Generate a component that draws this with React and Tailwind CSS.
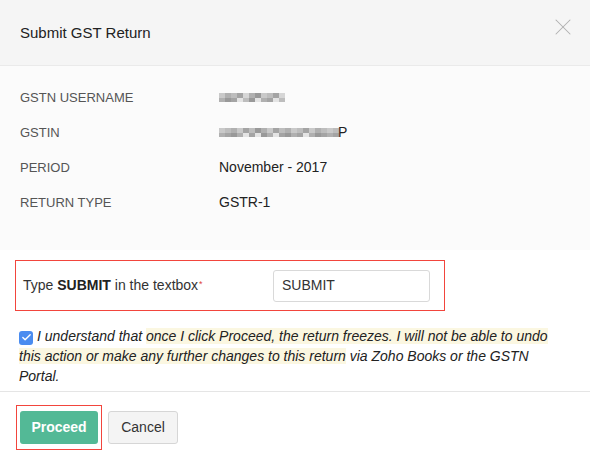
import { X, Check } from 'lucide-react'

const ROWS = [
  { label: 'GSTN USERNAME', blur: [3, 5, 4, 6, 2, 5, 7, 3, 4, 6, 2] },
  { label: 'GSTIN', blur: [3, 4, 5, 3, 6, 4, 7, 5, 3, 6, 4, 5, 3, 4, 6, 3, 5, 4, 3, 4], suffix: 'P' },
  { label: 'PERIOD', value: 'November - 2017' },
  { label: 'RETURN TYPE', value: 'GSTR-1' },
]

const SHADES = ['#ffffff', '#e4e4e4', '#d6d6d6', '#c9c9c9', '#bdbdbd', '#b0b0b0', '#a4a4a4', '#999999']

function Blur({ cells }) {
  // pixelated placeholder for redacted values
  return (
    <span className="inline-flex flex-col">
      <span className="flex">
        {cells.map((c, i) => (
          <span key={i} className="w-[6px] h-[5px]" style={{ background: SHADES[c] }} />
        ))}
      </span>
      <span className="flex">
        {cells.map((c, i) => (
          <span key={i} className="w-[6px] h-[4px]" style={{ background: SHADES[Math.max(1, (c + 2) % 8)] }} />
        ))}
      </span>
    </span>
  )
}

export default function App() {
  return (
    <div className="w-[590px] h-[465px] bg-white font-['Liberation_Sans',Arial,sans-serif] text-[#222] overflow-hidden">
      <div className="h-[66px] bg-[#f5f5f5] border-b border-[#eaeaea] flex items-center justify-between pl-5 pr-[13px]">
        <h2 className="text-[15px] text-[#222] pt-[1px]">Submit GST Return</h2>
        <X className="w-[28px] h-[28px] text-[#b0b0b0] -mt-[11px]" strokeWidth={0.9} />
      </div>

      <div className="bg-[#fbfbfb] pt-[14px] pb-[30px] pl-5 h-[184px]">
        {ROWS.map(r => (
          <div key={r.label} className="flex items-center h-[35px]">
            <div className="w-[199px] text-[13px] text-[#555]">{r.label}</div>
            <div className="text-[14px] text-[#222] flex items-center">
              {r.blur && <Blur cells={r.blur} />}
              {r.suffix && <span className="-ml-[1px]">{r.suffix}</span>}
              {r.value}
            </div>
          </div>
        ))}
      </div>

      <div className="pt-[10px] pl-[15px] pr-4">
        <div className="w-[430px] h-[51px] border border-[#f2453d] flex items-center pl-[7px]">
          <div className="w-[250px] text-[14px] text-[#333]">
            Type <span className="font-semibold text-[#222]">SUBMIT</span> in the textbox
            <sup className="text-[#e0433a] text-[9px] relative -top-[3px] ml-[1px]">*</sup>
          </div>
          <div className="w-[157px] h-[32px] border border-[#d9d9d9] rounded-[3px] flex items-center px-[8px] text-[14px] text-[#333]">
            SUBMIT
          </div>
        </div>

        <p className="mt-[15px] pl-[4px] text-[14px] leading-[20px] italic text-[#222] w-[544px]">
          <span className="inline-flex align-[-2px] w-[14px] h-[14px] rounded-[3px] bg-[#4a8cf0] items-center justify-center mr-[4px] not-italic">
            <Check className="w-[11px] h-[11px] text-white" strokeWidth={3} />
          </span>
          I understand that{' '}
          <span className="bg-[#fbf7e1]">once I click Proceed, the return freezes. I will not be able to undo this action or make any further changes to this return</span>{' '}
          via Zoho Books or the GSTN Portal.
        </p>
      </div>

      <div className="mt-[5px] border-t border-[#e5e5e5] pt-[13px] pl-4 flex items-start gap-[6px]">
        <div className="border border-[#f2453d] px-[3px] pt-[5px] pb-[5px]">
          <button className="w-[78px] h-[33px] bg-[#53b996] rounded-[3px] text-white text-[14px] font-bold">Proceed</button>
        </div>
        <button className="mt-[6px] w-[70px] h-[33px] bg-[#f4f4f4] border border-[#d6d6d6] rounded-[3px] text-[14px] text-[#333]">Cancel</button>
      </div>
    </div>
  )
}
